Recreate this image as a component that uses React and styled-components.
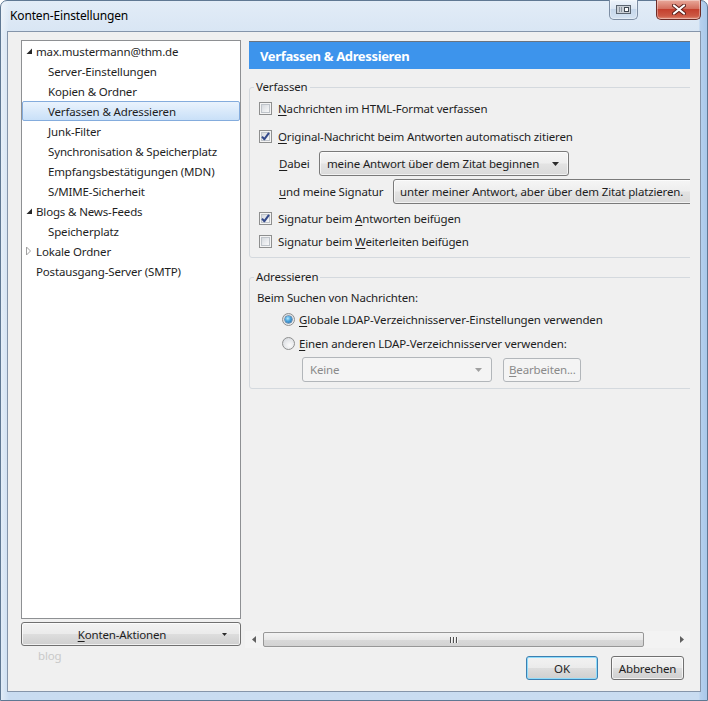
import React from 'react';
import styled, { createGlobalStyle } from 'styled-components';

const GlobalStyle = createGlobalStyle`
    html, body {
        margin: 0;
        padding: 0;
        background: #ffffff;
    }
    body {
        font-family: "Noto Sans", "Open Sans", sans-serif;
        font-size: 11.5px;
        letter-spacing: -0.15px;
        color: #1e1e1e;
    }
`;

const Window = styled.div`
    width: 708px;
    height: 701px;
    box-sizing: border-box;
    display: flex;
    flex-direction: column;
    padding: 0 6px 8px 6px;
    border: 1px solid #5f7893;
    border-radius: 7px 7px 0 0;
    background:
        linear-gradient(to right, rgba(255, 255, 255, 0.45) 0, rgba(255, 255, 255, 0) 8px),
        linear-gradient(to left, #a9c8ea 0, #b7d1ee 7px, rgba(0, 0, 0, 0) 8px),
        linear-gradient(to bottom, #e2ecf7 0, #d6e4f3 40px, #c9dcf1 100%);
`;

const TitleBar = styled.div`
    height: 30px;
    display: flex;
    align-items: flex-start;
`;

const Title = styled.span`
    margin: 8px 0 0 3px;
    font-size: 12px;
    line-height: 14px;
    color: #000000;
`;

const Caption = styled.div`
    margin-left: auto;
    display: flex;
    align-items: flex-start;
    gap: 18px;
    margin-top: -1px;
`;

const CaptionButton = styled.div`
    width: ${(p) => p.$w}px;
    height: 20px;
    box-sizing: border-box;
    display: flex;
    align-items: center;
    justify-content: center;
    border: 1px solid ${(p) => (p.$close ? '#6d2c27' : '#7d8ea4')};
    border-top: none;
    border-radius: 0 0 5px 5px;
    background: ${(p) =>
        p.$close
            ? 'linear-gradient(#e9a99b 0%, #d4705f 45%, #c4402e 50%, #cd5a45 85%, #e3917c 100%)'
            : 'linear-gradient(#eef4fb 0%, #dbe6f3 45%, #c6d7eb 50%, #d5e3f2 100%)'};
    box-shadow: inset 0 0 0 1px rgba(255, 255, 255, 0.35);
`;

const Client = styled.div`
    flex: 1;
    display: flex;
    flex-direction: column;
    background: #f0f0f0;
    border: 1px solid #8595aa;
    padding: 8px 9px 0 13px;
    min-height: 0;
`;

const Main = styled.div`
    flex: 1;
    display: flex;
    gap: 4px;
    min-height: 0;
`;

const LeftColumn = styled.div`
    width: 220px;
    display: flex;
    flex-direction: column;
    padding-bottom: 2px;
`;

const Tree = styled.ul`
    flex: 1;
    margin: 0;
    padding: 0;
    list-style: none;
    background: #ffffff;
    border: 1px solid #8e9093;
`;

const TreeRow = styled.li`
    height: 20px;
    box-sizing: border-box;
    display: flex;
    align-items: center;
    padding-left: ${(p) => (p.$level ? 25 : 2)}px;
    border: 1px solid ${(p) => (p.$selected ? '#84acdd' : 'transparent')};
    border-radius: 2px;
    background: ${(p) => (p.$selected ? 'linear-gradient(#eaf3fd, #c9e0f8)' : 'transparent')};
    white-space: nowrap;
    color: #1e1e1e;
`;

const Twisty = styled.span`
    width: 10px;
    height: 10px;
    flex: none;
    display: inline-flex;
    align-items: center;
    margin-right: 1px;
`;

const TwistySpacer = styled.span`
    width: 11px;
    flex: none;
`;

const DropButton = styled.div`
    margin-top: 3px;
    height: 24px;
    box-sizing: border-box;
    display: grid;
    grid-template-columns: 1fr 10px;
    align-items: center;
    padding-right: 8px;
    border: 1px solid #707070;
    border-radius: 3px;
    background: linear-gradient(#f2f2f2 0%, #ebebeb 48%, #dddddd 52%, #cfcfcf 100%);
    box-shadow: inset 0 0 0 1px rgba(255, 255, 255, 0.7);
    text-align: center;
`;

const RightColumn = styled.div`
    width: 445px;
    display: flex;
    flex-direction: column;
`;

const Pane = styled.div`
    flex: 1;
    overflow: hidden;
    padding-top: 1px;
    min-height: 0;
`;

const PaneHeader = styled.div`
    margin-left: 4px;
    height: 28px;
    box-sizing: border-box;
    display: flex;
    align-items: center;
    padding: 0 0 0 11px;
    border-top: 1px solid #6a7480;
    background: #3d94ec;
    color: #ffffff;
    font-weight: 700;
    font-size: 13px;
    letter-spacing: -0.35px;
`;

const Group = styled.fieldset`
    margin: ${(p) => p.$top}px -3px 0 4px;
    padding: 0 0 ${(p) => p.$bottom}px 9px;
    border: 1px solid #d4d9de;
    border-radius: 3px;
    min-width: 0;
    display: flex;
    flex-direction: column;
`;

const GroupLabel = styled.legend`
    margin-left: -5px;
    padding: 0 2px;
    line-height: 16px;
`;

const Row = styled.div`
    height: ${(p) => p.$h || 22}px;
    margin-top: ${(p) => p.$mt || 0}px;
    margin-left: ${(p) => p.$ml || 0}px;
    display: flex;
    align-items: center;
    gap: ${(p) => p.$gap || 0}px;
    white-space: nowrap;
    flex: none;
`;

const Label = styled.span`
    width: ${(p) => (p.$w ? `${p.$w}px` : 'auto')};
    flex: none;
    color: ${(p) => (p.$disabled ? '#8a8a8a' : '#1e1e1e')};
`;

const Key = styled.u`
    text-decoration: underline;
    text-underline-offset: 2px;
    text-decoration-thickness: 1px;
`;

const Box = styled.span`
    width: 13px;
    height: 13px;
    box-sizing: border-box;
    flex: none;
    display: inline-flex;
    align-items: center;
    justify-content: center;
    border: 1px solid #8e8f8f;
    background: #f4f4f4;
    margin-right: 6px;
`;

const BoxInner = styled.span`
    width: 9px;
    height: 9px;
    box-sizing: border-box;
    display: inline-flex;
    align-items: center;
    justify-content: center;
    border: 1px solid #bfc4ca;
    background: linear-gradient(135deg, #d6dade 0%, #e9ebee 55%, #f8f8f8 100%);
    overflow: visible;
`;

const Radio = styled.span`
    width: 13px;
    height: 13px;
    box-sizing: border-box;
    flex: none;
    display: inline-flex;
    align-items: center;
    justify-content: center;
    border: 1px solid #8e8f8f;
    border-radius: 50%;
    background: radial-gradient(circle at 60% 65%, #fbfbfb 0%, #e4e6e9 55%, #cfd3d8 100%);
    margin-right: 4px;
`;

const RadioDot = styled.span`
    width: 7px;
    height: 7px;
    border-radius: 50%;
    background: radial-gradient(circle at 40% 35%, #b7ecff 0%, #4fa8e0 40%, #1b5c99 100%);
    box-shadow: 0 0 0 0.5px #1f4f7d;
`;

const MenuList = styled.div`
    width: ${(p) => p.$w}px;
    height: 25px;
    box-sizing: border-box;
    flex: none;
    display: flex;
    align-items: center;
    padding: 0 ${(p) => (p.$arrow ? 9 : 6)}px 0 ${(p) => p.$pl || 7}px;
    border: 1px solid ${(p) => (p.$disabled ? '#b2b6ba' : '#7a7a7a')};
    border-radius: 3px;
    background: ${(p) =>
        p.$disabled
            ? '#f4f4f4'
            : 'linear-gradient(#f5f5f5 0%, #eeeeee 48%, #e3e3e3 52%, #dadada 100%)'};
    box-shadow: ${(p) => (p.$disabled ? 'none' : 'inset 0 0 0 1px rgba(255,255,255,0.65)')};
    color: ${(p) => (p.$disabled ? '#8a8a8a' : '#1e1e1e')};
    white-space: nowrap;
`;

const MenuText = styled.span`
    flex: 1;
`;

const PushButton = styled.div`
    width: ${(p) => p.$w}px;
    height: ${(p) => p.$h || 24}px;
    box-sizing: border-box;
    flex: none;
    display: flex;
    align-items: center;
    justify-content: ${(p) => (p.$left ? 'flex-start' : 'center')};
    padding-left: ${(p) => (p.$left ? 5 : 0)}px;
    border: 1px solid ${(p) => (p.$disabled ? '#b2b6ba' : p.$default ? '#3c7fb1' : '#707070')};
    border-radius: 3px;
    background: ${(p) =>
        p.$disabled ? '#f4f4f4' : 'linear-gradient(#f2f2f2 0%, #ebebeb 48%, #dddddd 52%, #cfcfcf 100%)'};
    box-shadow: ${(p) =>
        p.$disabled ? 'none' : p.$default ? 'inset 0 0 0 1px #8fdcfb' : 'inset 0 0 0 1px rgba(255,255,255,0.7)'};
    color: ${(p) => (p.$disabled ? '#8a8a8a' : '#1e1e1e')};
    white-space: nowrap;
`;

const HScroll = styled.div`
    height: 17px;
    display: flex;
    align-items: stretch;
    background: #f3f3f3;
`;

const ScrollArrow = styled.div`
    width: 17px;
    flex: none;
    display: flex;
    align-items: center;
    justify-content: center;
`;

const ScrollThumb = styled.div`
    width: 381px;
    margin: 1px 0 1px 1px;
    box-sizing: border-box;
    display: flex;
    align-items: center;
    justify-content: center;
    gap: 2px;
    border: 1px solid #979797;
    border-radius: 2px;
    background: linear-gradient(#f3f3f3 0%, #e8e8e8 50%, #d9d9d9 52%, #d3d3d3 100%);
`;

const ScrollTrack = styled.span`
    flex: 1;
`;

const Grip = styled.span`
    width: 1px;
    height: 6px;
    background: #4f4f4f;
    box-shadow: 1px 0 0 #f6f6f6;
`;

const Footer = styled.div`
    height: 43px;
    display: flex;
    align-items: flex-start;
    padding-right: 7px;
    gap: 13px;
`;

const Ghost = styled.span`
    margin: 1px auto 0 17px;
    line-height: 14px;
    color: #c9c9c9;
`;

const FooterButtons = styled.div`
    display: flex;
    gap: 13px;
    margin-top: 8px;
`;

const Arrow = ({ color = '#2b2b2b', w = 7 }) => (
    <svg width={w} height="4" viewBox="0 0 7 4">
        <path d="M0 0 H7 L3.5 4 Z" fill={color} />
    </svg>
);

const Check = () => (
    <svg width="11" height="11" viewBox="0 0 11 11" style={{ margin: -2 }}>
        <path d="M2 5.6 L4.4 8.2 L9 1.8" fill="none" stroke="#33498a" strokeWidth="2" strokeLinejoin="round" />
    </svg>
);

const CheckBox = ({ checked }) => (
    <Box>
        <BoxInner>{checked && <Check />}</BoxInner>
    </Box>
);

const RadioButton = ({ selected }) => <Radio>{selected && <RadioDot />}</Radio>;

const TwistyIcon = ({ open }) => (
    <Twisty>
        {open ? (
            <svg width="8" height="8" viewBox="0 0 8 8">
                <path d="M7 1.5 V7 H1.5 Z" fill="#262626" />
            </svg>
        ) : (
            <svg width="8" height="10" viewBox="0 0 8 10">
                <path d="M1.5 1 L5.5 5 L1.5 9 Z" fill="#ffffff" stroke="#a0a0a0" />
            </svg>
        )}
    </Twisty>
);

const treeItems = [
    { name: 'max.mustermann@thm.de', level: 0, twisty: 'open' },
    { name: 'Server-Einstellungen', level: 1 },
    { name: 'Kopien & Ordner', level: 1 },
    { name: 'Verfassen & Adressieren', level: 1, selected: true },
    { name: 'Junk-Filter', level: 1 },
    { name: 'Synchronisation & Speicherplatz', level: 1 },
    { name: 'Empfangsbestätigungen (MDN)', level: 1 },
    { name: 'S/MIME-Sicherheit', level: 1 },
    { name: 'Blogs & News-Feeds', level: 0, twisty: 'open' },
    { name: 'Speicherplatz', level: 1 },
    { name: 'Lokale Ordner', level: 0, twisty: 'closed' },
    { name: 'Postausgang-Server (SMTP)', level: 0, twisty: 'none' },
];

const ScrollLeft = () => (
    <svg width="4" height="7" viewBox="0 0 4 7">
        <path d="M4 0 V7 L0 3.5 Z" fill="#606060" />
    </svg>
);

const ScrollRight = () => (
    <svg width="4" height="7" viewBox="0 0 4 7">
        <path d="M0 0 V7 L4 3.5 Z" fill="#606060" />
    </svg>
);

export default function App() {
    return (
        <>
            <GlobalStyle />
            <Window>
                <TitleBar>
                    <Title>Konten-Einstellungen</Title>
                    <Caption>
                        <CaptionButton $w={29}>
                            <svg width="15" height="9" viewBox="0 0 15 9">
                                <rect x="0.5" y="0.5" width="14" height="8" fill="#c9cfd6" stroke="#5b6571" />
                                <rect x="3" y="2" width="1" height="5" fill="#8d96a1" />
                                <rect x="5" y="2" width="1" height="5" fill="#8d96a1" />
                                <rect x="8" y="2" width="5" height="5" fill="#3f4852" />
                                <rect x="9" y="3" width="3" height="3" fill="#ffffff" />
                            </svg>
                        </CaptionButton>
                        <CaptionButton $w={45} $close>
                            <svg width="14" height="11" viewBox="0 0 14 11">
                                <path d="M2 1.5 L12 9.5 M12 1.5 L2 9.5" stroke="#5a1f1a" strokeWidth="4" strokeLinecap="round" />
                                <path d="M2 1.5 L12 9.5 M12 1.5 L2 9.5" stroke="#ffffff" strokeWidth="2.2" strokeLinecap="round" />
                            </svg>
                        </CaptionButton>
                    </Caption>
                </TitleBar>

                <Client>
                    <Main>
                        <LeftColumn>
                            <Tree>
                                {treeItems.map((item) => (
                                    <TreeRow key={item.name} $level={item.level} $selected={item.selected}>
                                        {item.level === 0 &&
                                            (item.twisty === 'none' ? (
                                                <TwistySpacer />
                                            ) : (
                                                <TwistyIcon open={item.twisty === 'open'} />
                                            ))}
                                        {item.name}
                                    </TreeRow>
                                ))}
                            </Tree>
                            <DropButton>
                                <span>
                                    <Key>K</Key>onten-Aktionen
                                </span>
                                <svg width="5" height="3" viewBox="0 0 5 3">
                                    <path d="M0 0 H5 L2.5 3 Z" fill="#2b2b2b" />
                                </svg>
                            </DropButton>
                        </LeftColumn>

                        <RightColumn>
                            <Pane>
                                <PaneHeader>Verfassen &amp; Adressieren</PaneHeader>

                                <Group $top={10} $bottom={5}>
                                    <GroupLabel>Verfassen</GroupLabel>
                                    <Row $mt={2}>
                                        <CheckBox />
                                        <Label>
                                            <Key>N</Key>achrichten im HTML-Format verfassen
                                        </Label>
                                    </Row>
                                    <Row $mt={6}>
                                        <CheckBox checked />
                                        <Label>
                                            <Key>O</Key>riginal-Nachricht beim Antworten automatisch zitieren
                                        </Label>
                                    </Row>
                                    <Row $mt={4} $h={25} $ml={20}>
                                        <Label $w={40}>
                                            <Key>D</Key>abei
                                        </Label>
                                        <MenuList $w={250} $arrow>
                                            <MenuText>meine Antwort über dem Zitat beginnen</MenuText>
                                            <Arrow />
                                        </MenuList>
                                    </Row>
                                    <Row $mt={3} $h={25} $ml={20}>
                                        <Label $w={114}>
                                            <Key>u</Key>nd meine Signatur
                                        </Label>
                                        <MenuList $w={320} $pl={6}>
                                            <MenuText>unter meiner Antwort, aber über dem Zitat platzieren.</MenuText>
                                        </MenuList>
                                    </Row>
                                    <Row $mt={3}>
                                        <CheckBox checked />
                                        <Label>
                                            Signatur beim <Key>A</Key>ntworten beifügen
                                        </Label>
                                    </Row>
                                    <Row $mt={1}>
                                        <CheckBox />
                                        <Label>
                                            Signatur beim <Key>W</Key>eiterleiten beifügen
                                        </Label>
                                    </Row>
                                </Group>

                                <Group $top={11} $bottom={6}>
                                    <GroupLabel>Adressieren</GroupLabel>
                                    <Row $mt={4} $h={16} $ml={-2}>
                                        <Label>Beim Suchen von Nachrichten:</Label>
                                    </Row>
                                    <Row $mt={3} $ml={23}>
                                        <RadioButton selected />
                                        <Label>
                                            <Key>G</Key>lobale LDAP-Verzeichnisserver-Einstellungen verwenden
                                        </Label>
                                    </Row>
                                    <Row $mt={2} $ml={23}>
                                        <RadioButton />
                                        <Label>
                                            <Key>E</Key>inen anderen LDAP-Verzeichnisserver verwenden:
                                        </Label>
                                    </Row>
                                    <Row $mt={3} $h={25} $ml={43} $gap={11}>
                                        <MenuList $w={190} $arrow $disabled>
                                            <MenuText>Keine</MenuText>
                                            <Arrow color="#a0a0a0" />
                                        </MenuList>
                                        <PushButton $w={78} $h={24} $disabled $left>
                                            <span>
                                                <Key>B</Key>earbeiten...
                                            </span>
                                        </PushButton>
                                    </Row>
                                </Group>
                            </Pane>

                            <HScroll>
                                <ScrollArrow>
                                    <ScrollLeft />
                                </ScrollArrow>
                                <ScrollThumb>
                                    <Grip />
                                    <Grip />
                                    <Grip />
                                </ScrollThumb>
                                <ScrollTrack />
                                <ScrollArrow>
                                    <ScrollRight />
                                </ScrollArrow>
                            </HScroll>
                        </RightColumn>
                    </Main>

                    <Footer>
                        <Ghost>blog</Ghost>
                        <FooterButtons>
                            <PushButton $w={72} $default>
                                OK
                            </PushButton>
                            <PushButton $w={73}>Abbrechen</PushButton>
                        </FooterButtons>
                    </Footer>
                </Client>
            </Window>
        </>
    );
}
